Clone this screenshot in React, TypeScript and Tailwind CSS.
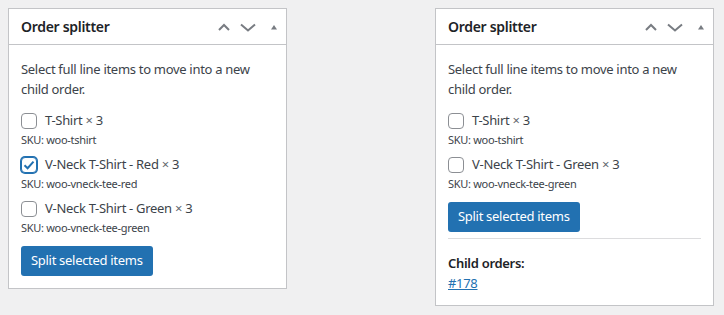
import React from 'react';

type Item = { name: string; sku: string; checked?: boolean };

const font = { fontFamily: '"Noto Sans", "Open Sans", sans-serif' };

function HeaderIcons() {
  return (
    <div className="flex items-center text-[#787c82]">
      <svg width="24" height="24" viewBox="0 0 24 24">
        <path d="M7 15 L12 10 L17 15" fill="none" stroke="currentColor" strokeWidth="2" />
      </svg>
      <svg width="24" height="24" viewBox="0 0 24 24" className="mr-1">
        <path d="M5 9.5 L12 15.5 L19 9.5" fill="none" stroke="currentColor" strokeWidth="2" />
      </svg>
      <svg width="20" height="24" viewBox="0 0 20 24">
        <path d="M7 14.5 L10 10 L13 14.5 Z" fill="currentColor" />
      </svg>
    </div>
  );
}

function Checkbox({ checked }: { checked?: boolean }) {
  return (
    <span
      className={
        'inline-flex w-4 h-4 rounded-[4px] border bg-white items-center justify-center shrink-0 ' +
        (checked ? 'border-[#2271b1] shadow-[0_0_0_1px_#2271b1]' : 'border-[#8c8f94]')
      }
    >
      {checked && (
        <svg width="14" height="14" viewBox="0 0 14 14">
          <path d="M2.5 7.2 L5.6 10.2 L11.5 3.6" fill="none" stroke="#2271b1" strokeWidth="2" />
        </svg>
      )}
    </span>
  );
}

function Panel({ items, children }: { items: Item[]; children?: React.ReactNode }) {
  return (
    <div className="w-[279px] bg-white border border-[#c3c4c7] tracking-[-0.3px]" style={font}>
      <div className="h-[36px] flex items-center justify-between pl-3 pr-[2px] border-b border-[#c3c4c7]">
        <h2 className="text-[14px] font-semibold text-[#1d2327]">Order splitter</h2>
        <HeaderIcons />
      </div>
      <div className="px-3 pb-3 text-[13px] text-[#3c434a]">
        <p className="mt-[15px] leading-[19.5px]">Select full line items to move into a new child order.</p>
        <div className="mt-[12px] flex flex-col gap-[6px]">
          {items.map((it) => (
            <div key={it.sku}>
              <label className="flex items-center gap-2 h-[20px]">
                <Checkbox checked={it.checked} />
                <span>
                  {it.name} <span className="text-[#646970]">×</span> 3
                </span>
              </label>
              <div className="text-[11px] leading-[18px] text-[#3c434a]">SKU: {it.sku}</div>
            </div>
          ))}
        </div>
        <button className="mt-[9px] h-[30px] px-[10px] bg-[#2271b1] text-white rounded-[3px] text-[13px]">
          Split selected items
        </button>
        {children}
      </div>
    </div>
  );
}

export default function App() {
  return (
    <div className="min-h-screen bg-[#f0f0f1] flex items-start pt-2 pl-2">
      <Panel
        items={[
          { name: 'T-Shirt', sku: 'woo-tshirt' },
          { name: 'V-Neck T-Shirt - Red', sku: 'woo-vneck-tee-red', checked: true },
          { name: 'V-Neck T-Shirt - Green', sku: 'woo-vneck-tee-green' },
        ]}
      />
      <div className="ml-[148px]">
        <Panel
          items={[
            { name: 'T-Shirt', sku: 'woo-tshirt' },
            { name: 'V-Neck T-Shirt - Green', sku: 'woo-vneck-tee-green' },
          ]}
        >
          <hr className="mt-[6px] border-t border-[#dcdcde]" />
          <div className="mt-[14px] font-semibold text-[#1d2327] leading-[20px]">Child orders:</div>
          <a href="#" className="block text-[#2271b1] underline leading-[20px] w-fit">#178</a>
        </Panel>
      </div>
    </div>
  );
}
